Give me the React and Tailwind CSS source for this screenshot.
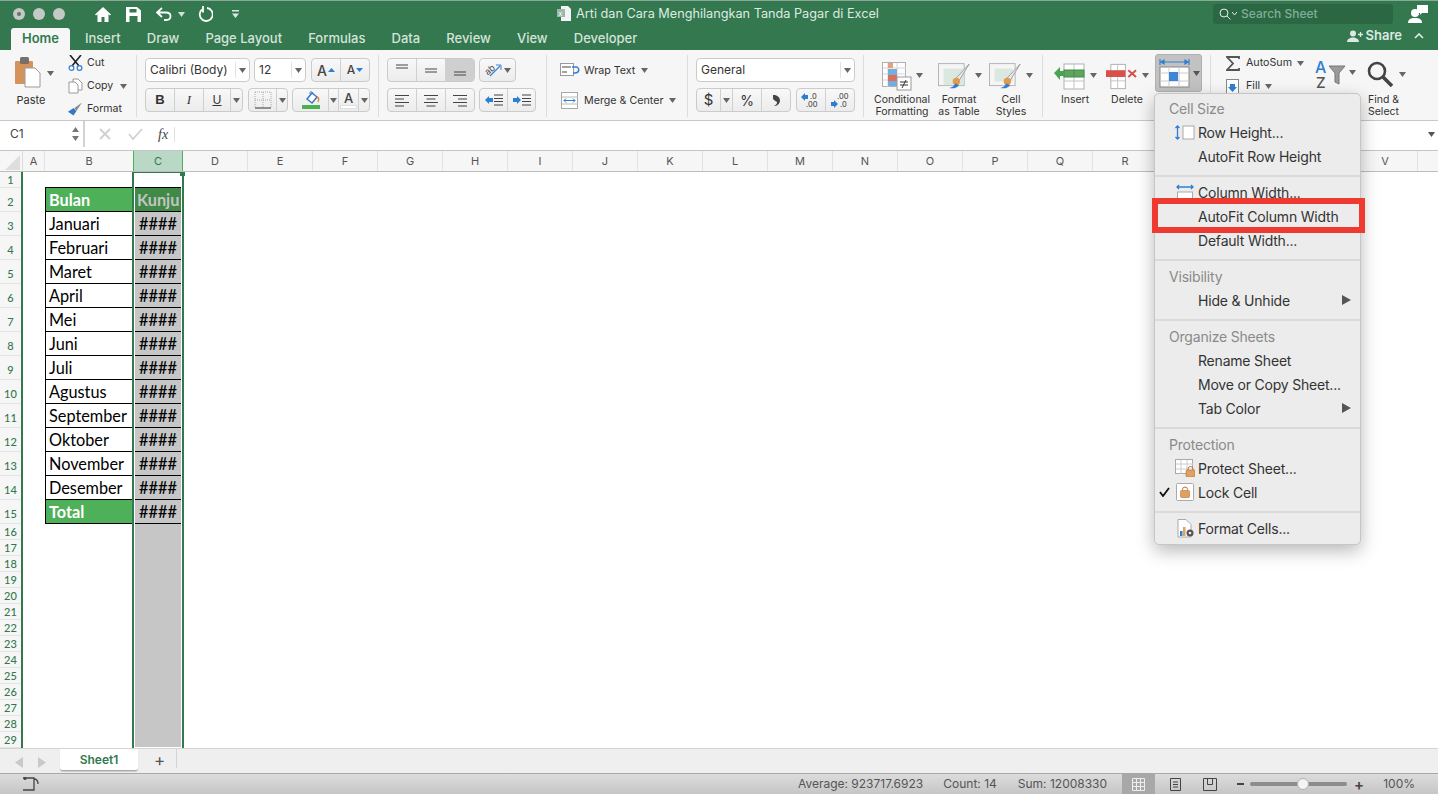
import React from 'react';

const UI = "font-['Inter','Liberation_Sans',sans-serif]";
const GREEN = '#33784e';
const COLS = ['D', 'E', 'F', 'G', 'H', 'I', 'J', 'K', 'L', 'M', 'N', 'O', 'P', 'Q', 'R', 'S', 'T', 'U', 'V'];
const MONTHS = ['Januari', 'Februari', 'Maret', 'April', 'Mei', 'Juni', 'Juli', 'Agustus', 'September', 'Oktober', 'November', 'Desember'];
const SMALL_ROWS = [16, 17, 18, 19, 20, 21, 22, 23, 24, 25, 26, 27, 28, 29];

const Caret = ({ className = '', color = '#666' }) => (
  <svg width="7" height="5" viewBox="0 0 7 5" className={`shrink-0 ${className}`}><path d="M0 0h7L3.5 5z" fill={color} /></svg>
);

const Sep = () => <div className="w-px h-[62px] mt-[5px] bg-[#dcdcdc] shrink-0" />;

const Seg = ({ w, children, active, last }) => (
  <div style={{ width: w }} className={`h-full flex items-center justify-center shrink-0 ${last ? '' : 'border-r border-[#d0d0d0]'} ${active ? 'bg-[#cfcfcf]' : ''}`}>{children}</div>
);

const BtnGroup = ({ children, className = '' }) => (
  <div className={`h-[24px] flex border border-[#cbcbcb] rounded-[4px] bg-gradient-to-b from-[#f8f8f8] to-[#ececec] overflow-hidden shrink-0 ${className}`}>{children}</div>
);

const Select = ({ w, text, className = '' }) => (
  <div style={{ width: w }} className={`h-[24px] flex items-center bg-white border border-[#cbcbcb] rounded-[4px] shrink-0 ${className}`}>
    <span className="pl-[4px] pb-[1px] text-[12px] text-[#333] flex-1 whitespace-nowrap">{text}</span>
    <div className="w-[13px] h-[16px] border-l border-[#e2e2e2] flex items-center justify-center mr-[1px]"><Caret /></div>
  </div>
);

const Lines = ({ widths, x = 'left' }) => (
  <svg width="16" height="13" viewBox="0 0 16 13">
    {widths.map((w, i) => {
      const start = x === 'left' ? 1 : x === 'right' ? 15 - w : 8 - w / 2;
      return <rect key={i} x={start} y={1 + i * 3.5} width={w} height="1" fill="#444" />;
    })}
  </svg>
);

const LargeBtn = ({ w, ml = 0, icon, lines, caret }) => (
  <div style={{ width: w, marginLeft: ml }} className="flex flex-col items-center shrink-0">
    <div className="h-[36px] flex items-center">
      {icon}
      {caret && <Caret className="ml-[4px] mb-[2px]" />}
    </div>
    <div className="text-[10.5px] leading-[12px] text-[#333] text-center whitespace-nowrap">
      {lines.map((l) => <div key={l}>{l}</div>)}
    </div>
  </div>
);

const Clipboard = () => (
  <div className="flex w-[67px] pl-[15px] shrink-0">
    <div className="flex flex-col items-center w-[34px]">
      <svg width="26" height="31" viewBox="0 0 26 31" className="mt-[7px] -ml-[8px]">
        <rect x="0" y="4" width="18" height="23" rx="1" fill="#d5935c" />
        <rect x="5" y="0" width="9" height="7" rx="1.5" fill="#77706a" />
        <path d="M10 11h10l5 5v14H10z" fill="#fff" stroke="#9a9a9a" />
      </svg>
      <span className="text-[11px] leading-[12px] mt-[6px] -ml-[2px] text-[#333]">Paste</span>
    </div>
    <Caret className="mt-[21px] ml-[-2px]" />
  </div>
);

const ClipItems = () => (
  <div className="flex flex-col w-[69px] shrink-0 text-[10.6px] text-[#333] pt-[2px]">
    {[
      ['Cut', <svg key="c" width="15" height="16" viewBox="0 0 15 16"><path d="M2 0l9 11M13 0L4 11" stroke="#222" strokeWidth="1.6" /><circle cx="3.5" cy="13" r="2.4" fill="none" stroke="#2f7fd0" strokeWidth="1.2" /><circle cx="11.5" cy="13" r="2.4" fill="none" stroke="#2f7fd0" strokeWidth="1.2" /></svg>],
      ['Copy', <svg key="p" width="15" height="16" viewBox="0 0 15 16"><path d="M5 1h5l4 4v7H5z" fill="#fff" stroke="#999" /><path d="M1 4h6l3 3v8H1z" fill="#fff" stroke="#999" /></svg>],
      ['Format', <svg key="f" width="17" height="16" viewBox="0 0 17 16"><path d="M16 1L8 7l2 3z" fill="#8a8a8a" /><path d="M1 11l6-4 3 3-3 5z" fill="#3478c6" /></svg>],
    ].map(([label, icon]) => (
      <div key={label} className="h-[23px] flex items-center">
        <div className="w-[16px] flex justify-center">{icon}</div>
        <span className="ml-[4px]">{label}</span>
        {label === 'Copy' && <Caret className="ml-[7px]" />}
      </div>
    ))}
  </div>
);

const FontGroup = () => (
  <div className="w-[241px] pl-[8px] pt-[8px] flex flex-col gap-[6px] shrink-0">
    <div className="flex">
      <Select w={105} text="Calibri (Body)" />
      <Select w={52} text="12" className="ml-[4px]" />
      <BtnGroup className="ml-[5px]">
        <Seg w={29}><span className="text-[14px] font-medium text-[#444]">A</span><svg width="7" height="4" className="ml-[1px]"><path d="M0 4h7L3.5 0z" fill="#2f7fd0" /></svg></Seg>
        <Seg w={28} last><span className="text-[12px] font-medium text-[#444]">A</span><svg width="7" height="4" className="ml-[1px]"><path d="M0 0h7L3.5 4z" fill="#2f7fd0" /></svg></Seg>
      </BtnGroup>
    </div>
    <div className="flex">
      <BtnGroup>
        <Seg w={29}><span className="text-[13px] font-bold text-[#333] font-['Liberation_Sans']">B</span></Seg>
        <Seg w={29}><span className="text-[13px] italic text-[#333] font-['Liberation_Serif']">I</span></Seg>
        <Seg w={27}><span className="text-[12px] underline text-[#333]">U</span></Seg>
        <Seg w={11} last><Caret /></Seg>
      </BtnGroup>
      <BtnGroup className="ml-[5px]">
        <Seg w={28}><svg width="18" height="18"><path d="M1 1h16v16M1 1v16M9 1v16M1 9h16" stroke="#aaa" strokeDasharray="1 1" fill="none" /><path d="M1 17h16" stroke="#333" /></svg></Seg>
        <Seg w={10} last><Caret /></Seg>
      </BtnGroup>
      <BtnGroup className="ml-[4px]">
        <Seg w={36}><svg width="20" height="20"><path d="M6 9l5-6 5 4-5 6z" fill="#fff" stroke="#3a78c2" strokeWidth="1.5" /><path d="M9 4c-1-3 3-3 3 0" fill="none" stroke="#3a78c2" /><path d="M16 7c2 1 2 3 1 5" stroke="#e58b3a" strokeWidth="1.5" fill="none" /><rect x="1" y="15" width="18" height="4" fill="#4caf50" /></svg></Seg>
        <Seg w={10}><Caret /></Seg>
        <Seg w={20}><div className="flex flex-col items-center"><span className="text-[13px] leading-[13px] text-[#444] font-medium">A</span><div className="w-[17px] h-[4px] bg-white border border-[#e0e0e0]" /></div></Seg>
        <Seg w={10} last><Caret /></Seg>
      </BtnGroup>
    </div>
  </div>
);

const AlignGroup = () => (
  <div className="w-[167px] pl-[8px] pt-[8px] flex flex-col gap-[6px] shrink-0">
    <div className="flex">
      <BtnGroup>
        <Seg w={29}><svg width="14" height="14"><path d="M1 2h12M1 5h12" stroke="#444" /></svg></Seg>
        <Seg w={29}><svg width="14" height="14"><path d="M1 6h12M1 9h12" stroke="#444" /></svg></Seg>
        <Seg w={28} active last><svg width="14" height="14"><path d="M1 9h12M1 12h12" stroke="#444" /></svg></Seg>
      </BtnGroup>
      <BtnGroup className="ml-[4px]">
        <Seg w={35} last>
          <svg width="17" height="16" viewBox="0 0 17 16"><text x="0" y="10" fontSize="9" fill="#444" transform="rotate(-40 6 8)" fontFamily="Inter">ab</text><path d="M5 14L15 4" stroke="#3a85d8" strokeWidth="1.2" /><path d="M11 3h5v5" fill="none" stroke="#3a85d8" /></svg>
          <Caret className="ml-[2px]" />
        </Seg>
      </BtnGroup>
    </div>
    <div className="flex">
      <BtnGroup>
        <Seg w={29}><Lines widths={[14, 9, 14, 9]} /></Seg>
        <Seg w={29}><Lines widths={[14, 9, 14, 9]} x="center" /></Seg>
        <Seg w={28} last><Lines widths={[14, 9, 14, 9]} x="right" /></Seg>
      </BtnGroup>
      <BtnGroup className="ml-[4px]">
        <Seg w={28}><svg width="18" height="12"><path d="M0 6l4-4v2h4v4H4v2z" fill="#2f7fd0" /><path d="M9 1h9M9 4.500h9M9 7.500h9M9 11h9" stroke="#444" /></svg></Seg>
        <Seg w={27} last><svg width="18" height="12"><path d="M8 6L4 2v2H0v4h4v2z" fill="#2f7fd0" /><path d="M9 1h9M9 4.500h9M9 7.500h9M9 11h9" stroke="#444" /></svg></Seg>
      </BtnGroup>
    </div>
  </div>
);

const WrapGroup = () => (
  <div className="w-[140px] pl-[13px] pt-[8px] flex flex-col gap-[6px] text-[10.7px] text-[#333] shrink-0">
    <div className="h-[24px] flex items-center">
      <svg width="20" height="14" className="mr-[4px]"><rect x="0.500" y="0.500" width="13" height="12" fill="#fff" stroke="#999" /><path d="M2 4h9M2 9h5" stroke="#444" /><path d="M12 4h5c3 2 2 6-2 6h-2" fill="none" stroke="#2f7fd0" strokeWidth="1.5" /></svg>
      <span className="mt-[2px]">Wrap Text</span>
      <Caret className="ml-[6px]" />
    </div>
    <div className="h-[24px] flex items-center">
      <svg width="18" height="17" className="mr-[5px] ml-[1px]"><rect x="0.500" y="0.500" width="16" height="16" fill="#fff" stroke="#a8a8a8" /><path d="M1 5h16M1 12h16" stroke="#bbb" /><path d="M3 8.500h11M3 8.500l2-2M3 8.500l2 2M14 8.500l-2-2M14 8.500l-2 2" stroke="#2f7fd0" /></svg>
      <span className="mt-[2px]">Merge &amp; Center</span>
      <Caret className="ml-[6px]" />
    </div>
  </div>
);

const NumberGroup = () => (
  <div className="w-[175px] pl-[8px] pt-[8px] flex flex-col gap-[6px] shrink-0">
    <Select w={159} text="General" />
    <div className="flex">
      <BtnGroup>
        <Seg w={24}><span className="text-[15px] text-[#333]">$</span></Seg>
        <Seg w={12}><Caret /></Seg>
        <Seg w={29}><span className="text-[14px] text-[#333]">%</span></Seg>
        <Seg w={28} last><svg width="7" height="11" viewBox="0 0 7 11"><path d="M0 0c4 0 7 2 7 5.500S4 11 1 11c2-1 3-2 3-3.500C4 6 0 6 0 3c0-1 0-2 0-3z" fill="#444" /></svg></Seg>
      </BtnGroup>
      <BtnGroup className="ml-[5px]">
        <Seg w={29}><svg width="20" height="16"><path d="M0 5l4-4v2h3v4H4v2z" fill="#2f7fd0" /><text x="9" y="7" fontSize="7.500" fill="#333" fontFamily="Inter">.0</text><text x="5" y="15" fontSize="7.500" fill="#333" fontFamily="Inter">.00</text></svg></Seg>
        <Seg w={28} last><svg width="20" height="16"><path d="M8 12L4 8v2H1v4h3v2z" fill="#2f7fd0" /><text x="7" y="7" fontSize="7.500" fill="#333" fontFamily="Inter">.00</text><text x="10" y="15" fontSize="7.500" fill="#333" fontFamily="Inter">.0</text></svg></Seg>
      </BtnGroup>
    </div>
  </div>
);

const StylesGroup = () => (
  <div className="w-[178px] pl-[9px] pt-[8px] flex shrink-0">
    <LargeBtn w={58} caret lines={['Conditional', 'Formatting']} icon={
      <svg width="30" height="29" viewBox="0 0 30 29">
        <rect x="0.500" y="0.500" width="23" height="24" fill="#fff" stroke="#b0b0b0" />
        <path d="M1 6h23M1 12h23M1 18h23M6 1v24M15 1v24" stroke="#d4d4d4" />
        <rect x="6" y="1" width="5" height="5" fill="#e8a07c" /><rect x="6" y="7" width="9" height="6" fill="#74aee0" /><rect x="6" y="13" width="9" height="6" fill="#d9705c" /><rect x="6" y="19" width="9" height="5" fill="#74aee0" />
        <rect x="15" y="15" width="14" height="13" fill="#fff" stroke="#999" /><path d="M18 20h8M18 23h8M20 26l4-8" stroke="#333" />
      </svg>} />
    <LargeBtn w={42} ml={7} caret lines={['Format', 'as Table']} icon={
      <svg width="33" height="28" viewBox="0 0 36 30" className="ml-[2px]">
        <rect x="0.500" y="1.500" width="28" height="24" fill="#f5f5f5" stroke="#b0b0b0" /><rect x="6" y="7" width="22" height="18" fill="#dbe8df" />
        <path d="M34 2L20 17l3 3z" fill="#e8e8e8" stroke="#999" /><circle cx="20" cy="21" r="4" fill="#e29a4e" /><path d="M12 28c4 0 6-3 7-5l4 2c-2 3-6 4-11 3z" fill="#2f7fd0" />
      </svg>} />
    <LargeBtn w={40} ml={11} caret lines={['Cell', 'Styles']} icon={
      <svg width="33" height="28" viewBox="0 0 36 30">
        <rect x="0.500" y="1.500" width="28" height="24" fill="#f5f5f5" stroke="#b0b0b0" /><rect x="6" y="7" width="20" height="14" fill="#dbe8df" />
        <path d="M34 2L20 17l3 3z" fill="#e8e8e8" stroke="#999" /><circle cx="20" cy="21" r="4" fill="#e29a4e" /><path d="M12 28c4 0 6-3 7-5l4 2c-2 3-6 4-11 3z" fill="#2f7fd0" />
      </svg>} />
  </div>
);

const CellsGroup = () => (
  <div className="w-[167px] pl-[9px] pt-[4px] flex shrink-0">
    <div className="pt-[4px] flex">
      <LargeBtn w={46} caret lines={['Insert']} icon={
        <svg width="32" height="27" viewBox="0 0 32 27">
          <rect x="10" y="1" width="20" height="25" fill="#fff" stroke="#b0b0b0" /><path d="M10 18h20M20 1v25" stroke="#c4c4c4" />
          <rect x="10" y="7" width="20" height="7" fill="#5fa55f" stroke="#3f8f47" /><path d="M20 7v7" stroke="#3f8f47" /><path d="M0 10l6-6v4h4v5H6v4z" fill="#4ca34f" />
        </svg>} />
      <LargeBtn w={46} ml={6} caret lines={['Delete']} icon={
        <svg width="32" height="27" viewBox="0 0 33 27">
          <rect x="5" y="1" width="15" height="25" fill="#fff" stroke="#b0b0b0" /><path d="M5 18h15M12 1v25" stroke="#c4c4c4" />
          <rect x="0" y="7" width="20" height="7" fill="#d9504b" /><path d="M23 7l8 7M31 7l-8 7" stroke="#d9504b" strokeWidth="2" />
        </svg>} />
    </div>
    <div className="w-[47px] h-[38px] ml-[5px] bg-[#c2c2c2] border border-[#b0b0b0] rounded-[3px] flex items-center pl-[3px] shrink-0">
      <svg width="31" height="31" viewBox="0 0 31 31">
        <path d="M1 1v6M30 1v6M2 4h27M2 4l3-2v4zM29 4l-3-2v4z" stroke="#2f7fd0" fill="#2f7fd0" strokeWidth="1.200" />
        <rect x="1" y="9" width="29" height="20" fill="#fff" stroke="#888" /><path d="M1 15h29M1 23h29M10 9v20M20 9v20" stroke="#ccc" />
        <rect x="10" y="14" width="9" height="9" fill="#3f87d6" />
      </svg>
      <Caret className="ml-[3px]" color="#555" />
    </div>
  </div>
);

const EditingGroup = () => (
  <div className="flex-1 pt-[3px] pl-[15px] flex shrink-0">
    <div className="w-[89px] text-[10.7px] text-[#333] shrink-0">
      <div className="h-[20px] flex items-center">
        <svg width="14" height="15" viewBox="0 0 14 15"><path d="M13 3V1H1l6 6.500L1 14h12v-2" fill="none" stroke="#555" strokeWidth="1.800" /></svg>
        <span className="ml-[6px]">AutoSum</span>
        <Caret className="ml-[5px]" />
      </div>
      <div className="h-[23px] flex items-center mt-[2px]">
        <svg width="14" height="15" viewBox="0 0 14 15"><rect x="0.500" y="0.500" width="12" height="14" fill="#fff" stroke="#888" /><path d="M4 5h5v3h2l-4.500 5L2 8h2z" fill="#2f7fd0" /></svg>
        <span className="ml-[6px]">Fill</span>
        <Caret className="ml-[5px]" />
      </div>
    </div>
    <div className="flex items-start pt-[7px] w-[52px] shrink-0">
      <svg width="31" height="29" viewBox="0 0 31 29">
        <text x="0" y="13" fontSize="16" fill="#2f7fd0" fontFamily="Inter" fontWeight="500">A</text>
        <text x="1" y="28" fontSize="15" fill="#555" fontFamily="Inter" fontWeight="500">Z</text>
        <path d="M14 6h16l-6 7v11l-4-2v-9z" fill="#9a9a9a" stroke="#777" />
      </svg>
      <Caret className="ml-[3px] mt-[10px]" />
    </div>
    <div className="w-[60px] flex flex-col items-start shrink-0 pt-[1px]">
      <div className="h-[40px] flex items-center">
        <svg width="27" height="27" viewBox="0 0 27 27"><circle cx="10" cy="10" r="8" fill="none" stroke="#444" strokeWidth="2.600" /><path d="M16 16l9 9" stroke="#444" strokeWidth="3.500" /></svg>
        <Caret className="ml-[5px]" />
      </div>
      <div className="text-[10.5px] leading-[12px] text-[#333] ml-[1px] whitespace-nowrap"><div>Find &amp;</div><div>Select</div></div>
    </div>
  </div>
);

const Ribbon = () => (
  <div className="h-[71px] flex bg-[#f6f6f6] border-b border-[#c8c8c8]">
    <Clipboard />
    <ClipItems />
    <Sep />
    <FontGroup />
    <Sep />
    <AlignGroup />
    <Sep />
    <WrapGroup />
    <Sep />
    <NumberGroup />
    <Sep />
    <StylesGroup />
    <Sep />
    <CellsGroup />
    <Sep />
    <EditingGroup />
  </div>
);

const TitleBar = () => (
  <div className="h-[27px] flex items-center relative border-t border-[#8aa898]">
    <div className="flex items-center pl-[13px] gap-[8px]">
      <div className="w-[12px] h-[12px] rounded-full bg-[#c4c9c6] flex items-center justify-center"><div className="w-[4px] h-[4px] rounded-full bg-[#6b6f6d]" /></div>
      <div className="w-[12px] h-[12px] rounded-full bg-[#c4c9c6]" />
      <div className="w-[12px] h-[12px] rounded-full bg-[#c4c9c6]" />
    </div>
    <svg width="16" height="15" viewBox="0 0 16 15" className="ml-[30px]"><path d="M8 0L0 7.500l1 1 1.500-1.300V15h4v-5h3v5h4V7.200L15 8.500l1-1z" fill="#fff" /></svg>
    <svg width="15" height="15" viewBox="0 0 15 15" className="ml-[15px]"><path d="M0 0h11l4 3.500V15H0z" fill="#fff" /><rect x="3.500" y="2" width="7" height="3.500" fill={GREEN} /><rect x="3.500" y="9" width="8" height="6" fill={GREEN} /></svg>
    <svg width="16" height="14" viewBox="0 0 16 14" className="ml-[15px]"><path d="M6 1L1 5.500 6 10M1 5.500h9c6 0 6 7.500 0 7.500H8" fill="none" stroke="#fff" strokeWidth="1.800" /></svg>
    <Caret className="ml-[6px]" color="#cfe0d6" />
    <svg width="16" height="16" viewBox="0 0 16 16" className="ml-[12px]"><path d="M5 3.500a6.500 6.500 0 1 0 5-1.500M6 0v6.500" fill="none" stroke="#fff" strokeWidth="1.800" /></svg>
    <svg width="7" height="8" viewBox="0 0 7 8" className="ml-[19px]"><path d="M0 0h7v1.500H0zM0 3.500h7L3.500 8z" fill="#dce8e1" /></svg>
    <div className="ml-[318px] flex items-center">
      <svg width="15" height="15" viewBox="0 0 15 15"><path d="M4 0h7l3 3v12H4z" fill="#f4f4f4" /><rect x="0" y="3" width="8" height="8" fill="#9db8a8" /><text x="1.500" y="9.500" fontSize="7" fill="#fff" fontFamily="Inter">x</text></svg>
      <span className="ml-[4px] text-[12.7px] text-[#dfeae3] whitespace-nowrap">Arti dan Cara Menghilangkan Tanda Pagar di Excel</span>
    </div>
    <div className="ml-auto flex items-center pr-[10px]">
      <div className="w-[180px] h-[20px] bg-[#2c6744] rounded-[3px] flex items-center pl-[6px]">
        <svg width="12" height="12" viewBox="0 0 12 12"><circle cx="5" cy="5" r="4" fill="none" stroke="#e4ece7" /><path d="M8 8l3.500 3.500" stroke="#e4ece7" /></svg>
        <svg width="5" height="4" viewBox="0 0 5 4" className="ml-[1px]"><path d="M0 0l2.500 3L5 0" fill="none" stroke="#e4ece7" /></svg>
        <span className="ml-[4px] text-[12px] text-[#7fb095] font-medium">Search Sheet</span>
      </div>
      <svg width="20" height="18" viewBox="0 0 20 18" className="ml-[15px]"><circle cx="7" cy="8" r="4" fill="#fff" /><path d="M0 18c0-4 3-5 7-5s7 1 7 5z" fill="#fff" /><path d="M9 0h11v8h-6l-2 2V8H9z" fill="#fff" /></svg>
    </div>
  </div>
);

const TabBar = () => (
  <div className="h-[23px] flex items-end relative">
    <div className="ml-[11px] w-[59px] h-[22px] bg-[#f6f6f6] rounded-t-[3px] flex items-center justify-center text-[13px] font-semibold text-[#2f7a4f]">Home</div>
    <div className="flex gap-[26.100px] ml-[15px] h-[22px] items-center text-[13px] font-medium text-[#d5e3da]">
      {['Insert', 'Draw', 'Page Layout', 'Formulas', 'Data', 'Review', 'View', 'Developer'].map((t) => <span key={t}>{t}</span>)}
    </div>
    <div className="ml-auto h-[23px] flex items-center pr-[14px] pb-[5px]">
      <svg width="16" height="12" viewBox="0 0 16 12"><circle cx="6" cy="3.500" r="3" fill="#dce8e1" /><path d="M0 12c0-3 3-4.500 6-4.500s6 1.500 6 4.500z" fill="#dce8e1" /><path d="M11 4.500h5M13.500 2v5" stroke="#dce8e1" strokeWidth="1.300" /></svg>
      <span className="ml-[3px] text-[13px] font-semibold text-[#dce8e1]">Share</span>
      <svg width="10" height="6" viewBox="0 0 10 6" className="ml-[12px]"><path d="M1 5l4-4 4 4" fill="none" stroke="#e6eee9" strokeWidth="1.600" /></svg>
    </div>
  </div>
);

const FormulaBar = () => (
  <div className="h-[26px] flex items-center bg-white text-[#444]">
    <div className="w-[85px] h-full flex items-center border-r-2 border-[#d2d2d2] shrink-0">
      <span className="pl-[10px] text-[12px] flex-1">C1</span>
      <svg width="7" height="14" viewBox="0 0 7 14" className="mr-[4px]"><path d="M0 5h7L3.500 0zM0 9h7l-3.500 5z" fill="#777" /></svg>
    </div>
    <svg width="12" height="12" className="ml-[14px]"><path d="M1 1l10 10M11 1L1 11" stroke="#d0d0d0" strokeWidth="1.800" /></svg>
    <svg width="15" height="12" className="ml-[17px]"><path d="M1 6l4 5 9-10" fill="none" stroke="#d0d0d0" strokeWidth="1.800" /></svg>
    <span className="ml-[15px] text-[14px] italic font-['Liberation_Serif'] text-[#444]">fx</span>
    <div className="ml-[6px] w-px h-[15px] bg-[#e0e0e0]" />
    <div className="flex-1" />
    <Caret className="mr-[3px]" color="#555" />
  </div>
);

const ColHeader = () => (
  <div className="h-[22px] flex bg-[#f6f6f6] border-b border-[#bdbdbd] text-[11px] text-[#555] mt-[3px] border-t-[1px] border-t-[#c4c4c4]">
    <div className="w-[23px] border-r border-[#dcdcdc] flex items-end shrink-0">
      <svg width="22" height="20"><path d="M20 4v15H5z" fill="#dedede" /></svg>
    </div>
    <div className="w-[22px] border-r border-[#e2e2e2] flex items-center justify-center shrink-0">A</div>
    <div className="w-[88px] flex items-center justify-center shrink-0">B</div>
    <div className="w-[50px] bg-[#b9d8c5] border-x border-[#4caf62] text-[#2f7a4f] flex items-center justify-center shrink-0">C</div>
    {COLS.map((c) => (
      <div key={c} className="w-[65px] border-r border-[#e2e2e2] flex items-center justify-center shrink-0">{c}</div>
    ))}
  </div>
);

const RowHeader = () => (
  <div className="w-[23px] bg-[#f6f6f6] border-r-2 border-[#33784e] text-[11px] font-medium text-[#33784e] shrink-0">
    <div className="h-[16px] flex items-end justify-center leading-[14px] border-b border-[#e4e4e4]">1</div>
    {[2, 3, 4, 5, 6, 7, 8, 9, 10, 11, 12, 13, 14, 15].map((n) => (
      <div key={n} className="h-[24px] flex items-end justify-center leading-[16px] pb-[1px] border-b border-[#e4e4e4]">{n}</div>
    ))}
    {SMALL_ROWS.map((n) => (
      <div key={n} className="h-[16px] flex items-end justify-center leading-[15px] border-b border-[#e4e4e4]">{n}</div>
    ))}
  </div>
);

const Sheet = () => (
  <div className="h-[576px] flex bg-white overflow-hidden font-['Lato',sans-serif] text-[16.3px] text-black">
    <RowHeader />
    <div className="w-[22px] shrink-0" />
    <div className="w-[87px] pt-[15px] shrink-0">
      <div className="h-[25px] pl-[3px] pt-[2px] flex items-center bg-[#4fb05a] border-y border-l border-black font-bold text-white">Bulan</div>
      {MONTHS.map((m) => (
        <div key={m} className="h-[24px] pl-[3px] pt-[2px] flex items-center border-b border-l border-black whitespace-nowrap">{m}</div>
      ))}
      <div className="h-[24px] pl-[3px] pt-[2px] flex items-center bg-[#4fb05a] border-b border-l border-black font-bold text-white">Total</div>
    </div>
    <div className="w-[52px] relative border-x-2 border-t-2 border-[#33784e] px-px shrink-0 -mt-px">
      <div className="absolute -right-[3px] -top-[2px] w-[5px] h-[5px] bg-[#33784e]" />
      <div className="h-[14px]" />
      <div className="h-[560px] bg-[#c6c6c6]">
        <div className="h-[25px] pl-[2px] pt-[2px] flex items-center bg-[#3e8a46] border-y border-black font-bold text-[#c4c4c4] overflow-hidden">Kunju</div>
        {[...MONTHS, 'Total'].map((m) => (
          <div key={m} className="h-[24px] pt-[2px] flex items-center justify-center border-b border-black font-medium">####</div>
        ))}
      </div>
    </div>
  </div>
);

const SheetTabs = () => (
  <div className="h-[25px] flex bg-[#efefef] border-t border-[#d4d4d4]">
    <svg width="9" height="11" viewBox="0 0 9 11" className="ml-[15px] mt-[8px]"><path d="M8 0v11L0 5.500z" fill="#c9c9c9" /></svg>
    <svg width="9" height="11" viewBox="0 0 9 11" className="ml-[14px] mt-[8px]"><path d="M0 0v11l8-5.500z" fill="#c9c9c9" /></svg>
    <div className="ml-[13px] w-[78px] h-[22px] bg-white rounded-b-[3px] border-b border-[#a8a8a8] shadow-[0_1px_1px_rgba(0,0,0,0.15)] flex items-center justify-center text-[12px] font-semibold text-[#33784e]">Sheet1</div>
    <span className="ml-[16px] text-[17px] leading-[22px] text-[#555]">+</span>
    <div className="ml-[11px] w-px h-[19px] bg-[#d4d4d4]" />
  </div>
);

const StatusBar = () => (
  <div className="h-[21px] flex items-center bg-gradient-to-b from-[#dcdcdc] to-[#c6c6c6] border-t border-[#a8a8a8] text-[12px] text-[#555]">
    <svg width="17" height="15" viewBox="0 0 17 15" className="ml-[23px]"><path d="M3 1h8v12H3M0 1h3M0 13h6M11 2c4 0 4 4 4 5" fill="none" stroke="#444" strokeWidth="1.300" /><circle cx="2" cy="1.500" r="1.500" fill="#444" /></svg>
    <span className="ml-auto whitespace-nowrap">Average: 923717.6923</span>
    <span className="ml-[20px] whitespace-nowrap">Count: 14</span>
    <span className="ml-[21px] whitespace-nowrap">Sum: 12008330</span>
    <div className="ml-[15px] w-[33px] h-[20px] bg-[#a8a8a8] flex items-center justify-center">
      <svg width="13" height="13"><path d="M.5.500h12v12H.5zM4.500.500v12M8.500.500v12M.5 4.500h12M.5 8.500h12" fill="none" stroke="#eee" /></svg>
    </div>
    <svg width="12" height="13" className="ml-[15px]"><path d="M.5.500h10v12H.5zM3 4h5M3 6.500h5M3 9h5" fill="none" stroke="#444" /></svg>
    <svg width="14" height="13" className="ml-[21px]"><path d="M.5.500h13v12H.5zM4.500.500v6h5v-6" fill="none" stroke="#444" /></svg>
    <div className="ml-[20px] w-[7px] h-[2px] bg-[#444]" />
    <div className="ml-[6px] w-[97px] h-[4px] rounded-full bg-[#8c8c8c] flex items-center">
      <div className="ml-[47px] w-[12px] h-[12px] rounded-full bg-[#f4f4f4] border border-[#b0b0b0]" />
    </div>
    <span className="ml-[7px] text-[15px] font-semibold text-[#444] leading-[15px]">+</span>
    <span className="ml-[19px] mr-[23px]">100%</span>
  </div>
);

const MenuHead = ({ children }) => <div className="h-[24px] pl-[14px] flex items-center text-[#8a8a8a]">{children}</div>;
const MenuDiv = () => <div className="h-[2px] mt-[7px] mb-[3px] bg-[#dadada]" />;

const MenuItem = ({ icon, arrow, children }) => (
  <div className="h-[24px] flex items-center text-[#333]">
    <div className="w-[43px] h-full flex items-center justify-end pr-[3px] shrink-0">{icon}</div>
    <span className="whitespace-nowrap">{children}</span>
    {arrow && <svg width="9" height="10" viewBox="0 0 9 10" className="ml-auto mr-[9px]"><path d="M0 0l9 5-9 5z" fill="#555" /></svg>}
  </div>
);

const LockGlyph = () => (
  <g><path d="M3 4V3a2.500 2.500 0 0 1 5 0v1" fill="none" stroke="#b5733a" /><rect x="1" y="4" width="9" height="7" rx="1" fill="#e0a060" stroke="#b5733a" strokeWidth=".6" /></g>
);

const FormatMenu = () => (
  <div className="absolute left-[1154px] top-[93px] w-[207px] h-[452px] bg-[#ececec] border border-[#c6c6c6] rounded-[5px] shadow-[0_6px_18px_rgba(0,0,0,0.28)] pt-[2px] text-[14px] tracking-[-0.2px]">
    <MenuHead>Cell Size</MenuHead>
    <MenuItem icon={<svg width="20" height="15" viewBox="0 0 20 15"><path d="M2.500 1v13M.5 3l2-2 2 2M.5 12l2 2 2-2" fill="none" stroke="#2f7fd0" strokeWidth="1.300" /><rect x="8" y="1" width="11" height="13" fill="#fff" stroke="#aaa" /></svg>}>Row Height...</MenuItem>
    <MenuItem>AutoFit Row Height</MenuItem>
    <MenuDiv />
    <MenuItem icon={<svg width="18" height="16" viewBox="0 0 18 16" className="mr-[1px]"><path d="M1 3h16M3 1L1 3l2 2M15 1l2 2-2 2" fill="none" stroke="#2f7fd0" strokeWidth="1.300" /><rect x="1.500" y="8" width="15" height="8" fill="#fff" stroke="#aaa" /></svg>}>Column Width...</MenuItem>
    <MenuItem>AutoFit Column Width</MenuItem>
    <MenuItem>Default Width...</MenuItem>
    <MenuDiv />
    <MenuHead>Visibility</MenuHead>
    <MenuItem arrow>Hide &amp; Unhide</MenuItem>
    <MenuDiv />
    <MenuHead>Organize Sheets</MenuHead>
    <MenuItem>Rename Sheet</MenuItem>
    <MenuItem>Move or Copy Sheet...</MenuItem>
    <MenuItem arrow>Tab Color</MenuItem>
    <MenuDiv />
    <MenuHead>Protection</MenuHead>
    <MenuItem icon={<svg width="20" height="18" viewBox="0 0 20 18"><rect x=".5" y=".5" width="17" height="14" fill="#fff" stroke="#aaa" /><path d="M1 5h17M1 10h17M6 1v14M12 1v14" stroke="#ccc" /><g transform="translate(10 7)"><LockGlyph /></g></svg>}>Protect Sheet...</MenuItem>
    <div className="relative">
      <svg width="11" height="10" viewBox="0 0 11 10" className="absolute left-[4px] top-[7px]"><path d="M1 5l3 4 6-8" fill="none" stroke="#111" strokeWidth="1.800" /></svg>
      <MenuItem icon={<svg width="18" height="18" viewBox="0 0 18 18" className="mr-[1px]"><rect x=".5" y=".5" width="17" height="17" rx="1" fill="#fff" stroke="#aaa" /><g transform="translate(3.500 3.500)"><LockGlyph /></g></svg>}>Lock Cell</MenuItem>
    </div>
    <MenuDiv />
    <MenuItem icon={<svg width="18" height="19" viewBox="0 0 18 19"><path d="M1 .5h8l5 5V18H1z" fill="#fff" stroke="#aaa" /><rect x="3" y="12" width="2.500" height="5" fill="#2f7fd0" /><rect x="6" y="8" width="2.500" height="9" fill="#e0a060" /><circle cx="13" cy="14" r="3.500" fill="#555" /><circle cx="13" cy="14" r="1.300" fill="#ececec" /></svg>}>Format Cells...</MenuItem>
  </div>
);

export default function App() {
  return (
    <div className={`relative w-[1438px] h-[794px] overflow-hidden bg-white ${UI}`}>
      <div className="bg-[#33784e]">
        <TitleBar />
        <TabBar />
      </div>
      <Ribbon />
      <FormulaBar />
      <ColHeader />
      <Sheet />
      <SheetTabs />
      <StatusBar />
      <FormatMenu />
      <div className="absolute left-[1152px] top-[198px] w-[213px] h-[35px] border-[6px] border-[#ee3a31]" />
    </div>
  );
}
